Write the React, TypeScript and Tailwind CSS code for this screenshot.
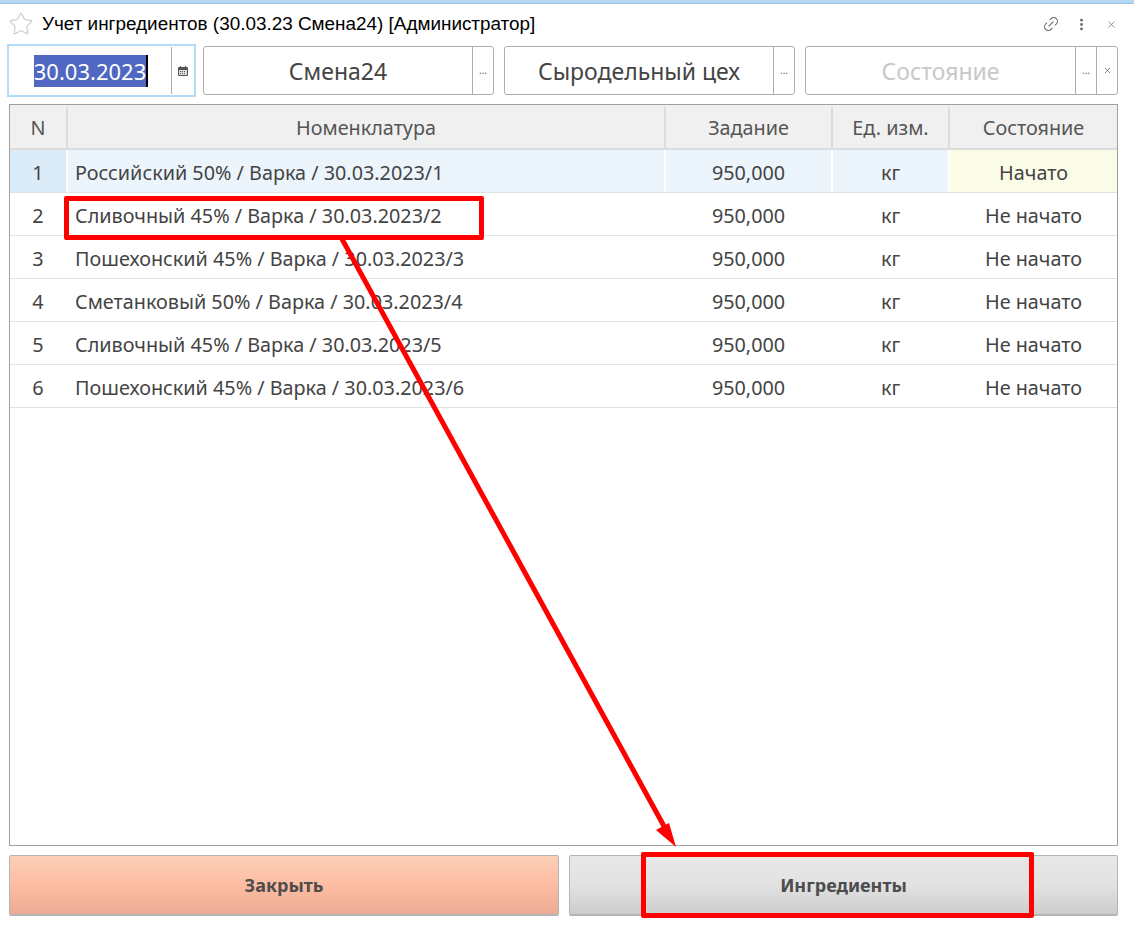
import { Link2, MoreVertical, Star, X } from 'lucide-react'

const rows = [
  { n: 1, name: 'Российский 50% / Варка / 30.03.2023/1', state: 'Начато' },
  { n: 2, name: 'Сливочный 45% / Варка / 30.03.2023/2', state: 'Не начато' },
  { n: 3, name: 'Пошехонский 45% / Варка / 30.03.2023/3', state: 'Не начато' },
  { n: 4, name: 'Сметанковый 50% / Варка / 30.03.2023/4', state: 'Не начато' },
  { n: 5, name: 'Сливочный 45% / Варка / 30.03.2023/5', state: 'Не начато' },
  { n: 6, name: 'Пошехонский 45% / Варка / 30.03.2023/6', state: 'Не начато' },
]

function Field({ text, width, clear, muted }: { text: string; width: string; clear?: boolean; muted?: boolean }) {
  return (
    <div className={`flex h-[49px] rounded-[3px] border border-[#aeaeae] bg-white ${width}`}>
      <div className={`flex flex-1 items-center justify-center pt-[1px] text-[23px] ${muted ? 'text-[#c8c8c8]' : 'text-[#444]'}`}>
        {text}
      </div>
      <div className="flex w-[21px] items-center justify-center border-l border-[#aeaeae] pb-[1px] text-[10px] text-[#666]">...</div>
      {clear && (
        <div className="flex w-[21px] items-center justify-center border-l border-[#aeaeae]">
          <X size={9} strokeWidth={2} className="text-[#555]" />
        </div>
      )}
    </div>
  )
}

export default function App() {
  return (
    <div className="relative h-[928px] w-[1134px] overflow-hidden bg-white font-['Noto_Sans',sans-serif]">
      <div className="h-[4px] border-b border-[#9cc3e0] bg-[#b5d8f5]" />

      <div className="flex h-[40px] items-center pl-[8px] pr-[17px]">
        <Star size={26} strokeWidth={1} className="text-[#c9c9c9]" />
        <span className="ml-[8px] font-['Liberation_Sans',sans-serif] text-[18.9px] text-black">
          Учет ингредиентов (30.03.23 Смена24) [Администратор]
        </span>
        <div className="ml-auto flex items-center gap-[14px] text-[#666]">
          <Link2 size={18} strokeWidth={1.4} className="-rotate-45" />
          <MoreVertical size={15} strokeWidth={2.5} />
          <X size={11} strokeWidth={1.5} className="ml-[3px]" />
        </div>
      </div>

      <div className="flex items-center pl-[7px] pr-[16px]">
        <div className="flex h-[53px] w-[189px] items-center border-2 border-[#b5dcf7] bg-white">
          <div className="flex flex-1 justify-center pl-[2px]">
            <span className="flex h-[32px] items-center border-r-[2px] border-black bg-[#5068c2] text-[22px] leading-none text-white">
              30.03.2023
            </span>
          </div>
          <div className="mr-[1px] flex h-[47px] w-[22px] items-center justify-center border-l border-[#aeaeae]">
            <svg width="10" height="10" viewBox="0 0 10 10">
              <path d="M1 1h1V0h1v1h4V0h1v1h1a1 1 0 0 1 1 1v7a1 1 0 0 1-1 1H1a1 1 0 0 1-1-1V2a1 1 0 0 1 1-1z" fill="#555" />
              <path d="M1 4h8v5H1z" fill="#ddd" />
              <path d="M2 5h1v1H2zM4 5h1v1H4zM6 5h1v1H6zM2 7h1v1H2zM4 7h1v1H4zM6 7h1v1H6z" fill="#555" />
            </svg>
          </div>
        </div>
        <div className="ml-[7px]">
          <Field text="Смена24" width="w-[291px]" />
        </div>
        <div className="ml-[10px]">
          <Field text="Сыродельный цех" width="w-[291px]" />
        </div>
        <div className="ml-[10px]">
          <Field text="Состояние" width="w-[313px]" clear muted />
        </div>
      </div>

      <div className="mx-[9px] mt-[7px] flex h-[742px] w-[1109px] flex-col border border-[#a0a0a0]">
        <div className="flex h-[45px] border-b-2 border-[#dcdcdc] bg-[#f0f0f0] pt-[2px] text-[19.8px] text-[#555]">
          <div className="flex w-[56px] items-center justify-center">N</div>
          <div className="flex w-[598px] items-center justify-center border-l-2 border-[#dcdcdc]">Номенклатура</div>
          <div className="flex w-[167px] items-center justify-center border-l-2 border-[#dcdcdc]">Задание</div>
          <div className="flex w-[117px] items-center justify-center border-l-2 border-[#dcdcdc]">Ед. изм.</div>
          <div className="flex flex-1 items-center justify-center border-l-2 border-[#dcdcdc]">Состояние</div>
        </div>
        {rows.map((r) => {
          const active = r.n === 1
          return (
            <div key={r.n} className="flex h-[43px] border-b border-[#e2e2e2] text-[19.8px] text-[#444]">
              <div className={`flex w-[56px] items-center justify-center pt-[3px] ${active ? 'bg-[#dcebf8]' : ''}`}>{r.n}</div>
              <div className={`flex w-[598px] items-center border-l-2 border-white pl-[7px] pt-[3px] ${active ? 'bg-[#ecf5fc]' : ''}`}>{r.name}</div>
              <div className={`flex w-[167px] items-center justify-center border-l-2 border-white pt-[3px] ${active ? 'bg-[#ecf5fc]' : ''}`}>950,000</div>
              <div className={`flex w-[117px] items-center justify-center border-l-2 border-white pt-[3px] ${active ? 'bg-[#ecf5fc]' : ''}`}>кг</div>
              <div className={`flex flex-1 items-center justify-center border-l-2 border-white pt-[3px] ${active ? 'bg-[#fbfce8]' : ''}`}>{r.state}</div>
            </div>
          )
        })}
      </div>

      <div className="mx-[9px] mt-[9px] flex gap-[10px]">
        <button className="h-[61px] w-[550px] rounded-[2px] border border-[#b4b4b4] border-b-2 bg-gradient-to-b from-[#fdcfb9] via-[#fdbda2] to-[#ecac95] text-[18px] font-bold text-[#4d4d4d]">
          Закрыть
        </button>
        <button className="h-[61px] w-[549px] rounded-[2px] border border-[#b4b4b4] border-b-2 bg-gradient-to-b from-[#e8e8e8] via-[#e2e2e2] to-[#cdcdcd] text-[18px] font-bold text-[#4d4d4d]">
          Ингредиенты
        </button>
      </div>

      {/* аннотации поверх скриншота */}
      <div className="absolute left-[64px] top-[196px] h-[44px] w-[420px] rounded-[2px] border-[5px] border-[#ff0000]" />
      <div className="absolute left-[641px] top-[852px] h-[66px] w-[393px] rounded-[2px] border-[5px] border-[#ff0000]" />
      <svg className="absolute left-0 top-0" width="1134" height="928">
        <line x1="342" y1="239" x2="665" y2="828" stroke="#ff0000" strokeWidth="5" />
        <polygon points="676,847 656,830 669,823" fill="#ff0000" />
      </svg>
    </div>
  )
}
